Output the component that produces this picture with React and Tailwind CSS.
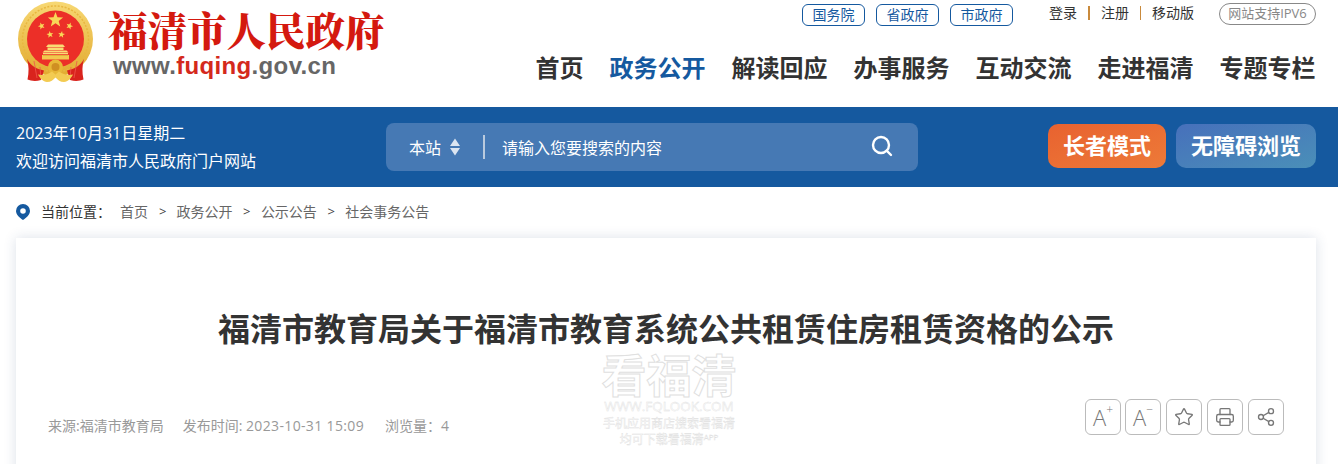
import React from "react";
import { Search, Star, Printer, Share2 } from "lucide-react";

const cjk = { fontFamily: '"Open Sans","Noto Sans CJK SC",sans-serif' };

function starPoints(cx, cy, r, rot = 0) {
  const p = [];
  for (let i = 0; i < 10; i++) {
    const rad = i % 2 === 0 ? r : r * 0.42;
    const a = -Math.PI / 2 + (i * Math.PI) / 5 + rot;
    p.push(`${(cx + rad * Math.cos(a)).toFixed(2)},${(cy + rad * Math.sin(a)).toFixed(2)}`);
  }
  return p.join(" ");
}

function Emblem() {
  return (
    <svg width="80" height="84" viewBox="16 0 80 84" className="shrink-0">
      <defs>
        <linearGradient id="gold" x1="0" y1="0" x2="0" y2="1">
          <stop offset="0" stopColor="#f7d873" />
          <stop offset="1" stopColor="#e2aa30" />
        </linearGradient>
      </defs>
      <circle cx="55.500" cy="38" r="37.500" fill="url(#gold)" />
      <circle cx="55.500" cy="38" r="33" fill="none" stroke="#e8b63f" strokeWidth="1.500" strokeDasharray="2 1.500" />
      <circle cx="55.500" cy="38" r="28.500" fill="#ec2f28" />
      <polygon points={starPoints(55.5, 19, 8)} fill="#f8d858" />
      <polygon points={starPoints(41.5, 25, 3.6, -0.35)} fill="#f8d858" />
      <polygon points={starPoints(69.5, 25, 3.6, 0.35)} fill="#f8d858" />
      <polygon points={starPoints(50, 33.5, 3.6, -0.15)} fill="#f8d858" />
      <polygon points={starPoints(61.5, 33.5, 3.6, 0.15)} fill="#f8d858" />
      <path d="M48 43.500h15l2 2.500H46zM47.500 46.500h16v2.500h-16zM44.500 49.500h22l2 2H42.500zM43 52h25v1.200H43z" fill="#f9dc74" />
      <path d="M42 54h27v4.500H42z" fill="#f3c84f" />
      <path d="M43 54.500h25" stroke="#d9a22d" strokeWidth="0.600" />
      <path d="M27 58c4 7 9 10 17 11.500l-3 9.500c-5 1.500-10 1-13.500-.5 1.500-7 1.500-14-.5-20.500zM84 58c-4 7-9 10-17 11.500l3 9.500c5 1.500 10 1 13.500-.5-1.500-7-1.500-14 .5-20.500z" fill="#d9231d" />
      <path d="M34 60l3 17M40 66l1 12M77 60l-3 17M71 66l-1 12" stroke="#f0554b" strokeWidth="0.800" fill="none" />
      <circle cx="55.500" cy="66" r="7.500" fill="#e8b838" />
      <circle cx="55.500" cy="66" r="4" fill="#cf8f22" />
      <path d="M38 73.500c5 1 10 0 14-3l3.500 3 3.500-3c4 3 9 4 14 3-2 4-5 7-9 7.500-4 0-6-2-8.500-4.500-2.500 2.500-4.500 4.500-8.500 4.500-4-.5-7-3.500-9-7.500z" fill="#f3cb52" />
    </svg>
  );
}

function Pill({ children }) {
  return (
    <a className="flex h-[22px] w-[63px] items-center justify-center rounded-[6px] border border-[#15599f] text-[14px] text-[#15599f]">
      {children}
    </a>
  );
}

function Tool({ children, className = "" }) {
  return (
    <div className={`flex h-[36px] w-[36px] items-center justify-center rounded-[6px] border border-[#bbbbbb] text-[#777777] ${className}`}>
      {children}
    </div>
  );
}

const navs = ["首页", "政务公开", "解读回应", "办事服务", "互动交流", "走进福清", "专题专栏"];

export default function App() {
  return (
    <div className="relative h-[464px] w-[1338px] overflow-hidden bg-white" style={cjk}>
      <header className="flex h-[107px] justify-between pl-4 pr-[22px]">
        <div className="flex items-start pt-[1px]">
          <Emblem />
          <div className="ml-[12px]">
            <div
              className="mt-[7px] text-[39.5px] font-black leading-[43px] text-[#d4190f]"
              style={{ fontFamily: '"Noto Serif CJK SC","Noto Sans CJK SC",serif' }}
            >
              福清市人民政府
            </div>
            <div
              className="ml-[5px] text-[24px] font-bold leading-[30px] tracking-[0.35px] text-[#666666]"
              style={{ fontFamily: '"Liberation Sans",sans-serif' }}
            >
              www.<span className="text-[#d4291c]">fuqing</span>.gov.cn
            </div>
          </div>
        </div>
        <div className="flex flex-col items-end">
          <div className="mt-[3px] flex h-[23px] items-center">
            <div className="flex gap-[11px]">
              <Pill>国务院</Pill>
              <Pill>省政府</Pill>
              <Pill>市政府</Pill>
            </div>
            <div className="-mt-[4px] ml-[36px] flex items-center text-[14px] text-[#333333]">
              <span>登录</span>
              <span className="ml-[11px] mr-[11px] h-[14px] w-[2px] bg-[#c98a3c]" />
              <span>注册</span>
              <span className="mx-[11px] h-[14px] w-px bg-[#c98a3c]" />
              <span>移动版</span>
            </div>
            <div className="-mt-[1px] ml-[25px] flex h-[22px] w-[97px] items-center justify-center rounded-full border border-[#888888] text-[13px] text-[#888888]">
              网站支持IPV6
            </div>
          </div>
          <nav className="mr-[0.5px] mt-[25px] flex gap-[26px] text-[24px] font-bold leading-[34px] text-[#333333]">
            {navs.map((n, i) => (
              <a key={n} className={i === 1 ? "text-[#15599f]" : ""}>
                {n}
              </a>
            ))}
          </nav>
        </div>
      </header>

      <section className="flex h-[80px] items-center bg-[#15599f] px-4 text-white">
        <div className="w-[370px] text-[16px] leading-[28px]">
          <div>2023年10月31日星期二</div>
          <div>欢迎访问福清市人民政府门户网站</div>
        </div>
        <div className="flex h-[48px] w-[532px] items-center rounded-[8px] bg-[#4679b4] pl-[23px] pr-[24px] text-[16px]">
          <span className="mt-[1px]">本站</span>
          <svg width="10" height="18" viewBox="0 0 10 18" className="ml-[9px]" fill="#dbe5f1">
            <path d="M5 0.500 10 8H0zM0 10h10L5 17.500z" />
          </svg>
          <span className="ml-[23px] h-[24px] w-[2px] bg-[#b9cade]" />
          <span className="ml-[17px] mt-[1px] flex-1">请输入您要搜索的内容</span>
          <Search size={24} strokeWidth={2.4} className="-mt-[2px]" />
        </div>
        <div className="-mt-[2px] ml-[130px] flex h-[44px] w-[118px] items-center justify-center rounded-[10px] bg-gradient-to-br from-[#e86230] to-[#ed7a38] pb-[2px] text-[22px] font-bold">
          长者模式
        </div>
        <div className="-mt-[2px] ml-[10px] flex h-[44px] w-[140px] items-center justify-center rounded-[10px] bg-gradient-to-br from-[#4770bb] to-[#4a8fb8] pb-[2px] text-[22px] font-bold">
          无障碍浏览
        </div>
      </section>

      <div className="flex h-[51px] items-center pb-[2px] pl-4 text-[14px] text-[#666666]">
        <svg width="14" height="16" viewBox="0 0 14 16" fill="#15599f">
          <path fillRule="evenodd" d="M7 0a7 7 0 0 1 7 7c0 3.600-4 7.200-7 9-3-1.800-7-5.400-7-9a7 7 0 0 1 7-7zm0 4.200a2.800 2.800 0 1 0 0 5.600 2.800 2.800 0 0 0 0-5.600z" />
        </svg>
        <span className="ml-[11px] text-[#333333]">当前位置：</span>
        <span className="ml-[9px]">首页</span>
        <span className="ml-[11px] mr-[10px] text-[13px] text-[#444444]">&gt;</span>
        <span>政务公开</span>
        <span className="mx-[10.5px] text-[13px] text-[#444444]">&gt;</span>
        <span>公示公告</span>
        <span className="mx-[10.5px] text-[13px] text-[#444444]">&gt;</span>
        <span>社会事务公告</span>
      </div>

      <main className="mx-4 h-[400px] w-[1300px] bg-white px-8 pt-[69px] shadow-[0_0_12px_rgba(40,70,120,0.16)]">
        <h1 className="text-center text-[32px] font-bold leading-[44px] text-[#333333]">
          福清市教育局关于福清市教育系统公共租赁住房租赁资格的公示
        </h1>
        <div className="mt-[48px] flex items-start justify-between">
          <div className="mt-[16px] flex text-[14px] text-[#999999]">
            <span>来源:福清市教育局</span>
            <span className="ml-[19px]">发布时间: <span className="tracking-[0.35px]">2023-10-31 15:09</span></span>
            <span className="ml-[21px]">浏览量：4</span>
          </div>
          <div className="flex gap-[5px]">
            <Tool>
              <span className="flex items-start text-[22px] font-light leading-none">A<span className="-mt-[2px] text-[12px] leading-none">+</span></span>
            </Tool>
            <Tool className="-ml-[1px]">
              <span className="flex items-start text-[22px] font-light leading-none">A<span className="-mt-[2px] text-[12px] leading-none">−</span></span>
            </Tool>
            <Tool><Star size={20} strokeWidth={1.6} /></Tool>
            <Tool><Printer size={20} strokeWidth={1.6} /></Tool>
            <Tool><Share2 size={20} strokeWidth={1.6} /></Tool>
          </div>
        </div>
      </main>

      <div className="absolute left-[600px] top-[353px] w-[138px] text-center text-white">
        <div className="text-[45px] font-bold leading-[46px] [-webkit-text-stroke:1px_#e0e0e0]">看福清</div>
        <div className="text-[13.5px] leading-[14px] [-webkit-text-stroke:0.4px_#e0e0e0]">WWW.FQLOOK.COM</div>
        <div className="mt-[3px] text-[12px] leading-[16px] [-webkit-text-stroke:0.4px_#e0e0e0]">手机应用商店搜索看福清</div>
        <div className="text-[12px] leading-[16px] [-webkit-text-stroke:0.4px_#e0e0e0]">均可下载看福清<sup className="text-[8px]">APP</sup></div>
      </div>
    </div>
  );
}
